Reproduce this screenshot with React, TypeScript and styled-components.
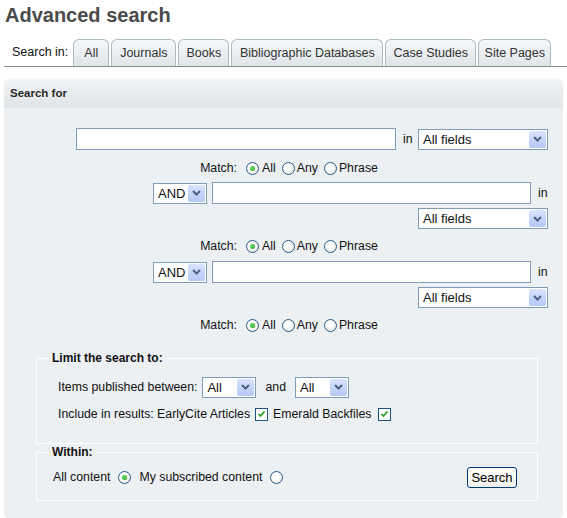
import React from 'react';
import styled, { createGlobalStyle } from 'styled-components';

const GlobalStyle = createGlobalStyle`
  body {
    margin: 0;
    background: #fff;
    font-family: "Liberation Sans", Arial, sans-serif;
    color: #111;
  }
`;

const Page = styled.div`
  width: 567px;
`;

const Title = styled.h1`
  margin: 0;
  padding: 3px 5px 0;
  font-size: 20px;
  line-height: 24px;
  font-weight: bold;
  color: #4a4a4a;
`;

const TabBar = styled.div`
  display: flex;
  align-items: flex-end;
  margin: 11px 0 0 4px;
  padding-left: 8px;
  height: 28px;
  border-bottom: 1px solid #86908f;
`;

const TabLabel = styled.span`
  font-size: 12.5px;
  color: #111;
  align-self: center;
  margin-right: 5px;
`;

const Tab = styled.div<{ $w: number }>`
  box-sizing: border-box;
  width: ${p => p.$w}px;
  height: 27px;
  margin-right: 2px;
  display: flex;
  align-items: center;
  justify-content: center;
  font-size: 12.5px;
  color: #333;
  white-space: nowrap;
  border: 1px solid #aabcc0;
  border-bottom: none;
  border-radius: 6px 6px 0 0;
  background: linear-gradient(#f6f8f9, #dee5e8);
`;

const Panel = styled.div`
  margin: 11px 4px 0;
  border-radius: 6px;
  background: #ecf0f3;
`;

const PanelHeader = styled.div`
  height: 30px;
  padding-left: 6px;
  display: flex;
  align-items: center;
  font-size: 11.5px;
  font-weight: bold;
  color: #2a2a2a;
  border-radius: 6px 6px 0 0;
  background: linear-gradient(#f3f5f7, #dfe4e8);
`;

const PanelBody = styled.div`
  padding: 20px 15px 18px 22px;
`;

const Terms = styled.div`
  display: flex;
  flex-direction: column;
  align-items: flex-end;
`;

const Row = styled.div<{ $mt?: number; $gap?: number }>`
  display: flex;
  align-items: center;
  gap: ${p => p.$gap ?? 7}px;
  margin-top: ${p => p.$mt ?? 0}px;
`;

const MatchRow = styled.div<{ $mt: number }>`
  align-self: center;
  display: flex;
  align-items: center;
  height: 16px;
  margin-top: ${p => p.$mt}px;
  margin-left: 4px;
  font-size: 12.3px;
`;

const MatchLabel = styled.span`
  margin-right: 9px;
`;

const OptionText = styled.span<{ $ml?: number; $mr?: number }>`
  font-size: 12.3px;
  margin-left: ${p => p.$ml ?? 0}px;
  margin-right: ${p => p.$mr ?? 0}px;
  white-space: nowrap;
`;

const TextField = styled.input<{ $w: number }>`
  box-sizing: border-box;
  width: ${p => p.$w}px;
  height: 22px;
  border: 1px solid #7f9db9;
  background: #fff;
  padding: 0 3px;
  font: 13px "Liberation Sans", Arial, sans-serif;
  outline: none;
`;

const InLabel = styled.span<{ $mx?: number }>`
  font-size: 12.3px;
  width: 8px;
  margin: 0 ${p => p.$mx ?? 0}px;
`;

const SelectBox = styled.div<{ $w: number }>`
  box-sizing: border-box;
  width: ${p => p.$w}px;
  height: 21px;
  border: 1px solid #7f9db9;
  background: #fff;
  display: flex;
  align-items: center;
  padding: 1px;
  font-size: 13px;
`;

const SelectText = styled.span`
  flex: 1;
  padding-left: 3px;
  white-space: nowrap;
`;

const ArrowBtn = styled.span`
  width: 17px;
  height: 17px;
  border-radius: 2px;
  background: linear-gradient(#d9e4fd, #b4c8f6);
  display: flex;
  align-items: center;
  justify-content: center;
`;

const RadioDot = styled.span<{ $checked?: boolean }>`
  box-sizing: border-box;
  width: 13px;
  height: 13px;
  border-radius: 50%;
  border: 1px solid #2a5a8a;
  background: radial-gradient(circle at 40% 40%, #fff 30%, #dcdcd6 100%);
  display: inline-flex;
  align-items: center;
  justify-content: center;
  flex-shrink: 0;

  &::after {
    content: '';
    display: ${p => (p.$checked ? 'block' : 'none')};
    width: 5px;
    height: 5px;
    border-radius: 50%;
    background: radial-gradient(circle at 40% 40%, #6fe06f, #1c9a1c);
  }
`;

const CheckBox = styled.span`
  box-sizing: border-box;
  width: 13px;
  height: 13px;
  border: 1px solid #1c5180;
  background: #fff;
  display: inline-flex;
  align-items: center;
  justify-content: center;
  flex-shrink: 0;
`;

const Group = styled.fieldset<{ $mt: number }>`
  margin: ${p => p.$mt}px 10px 0 10px;
  padding: 0;
  border: 1px solid #fff;
  min-width: 0;
`;

const Legend = styled.legend`
  margin-left: 11px;
  padding: 0 4px;
  font-size: 12px;
  line-height: 16px;
  font-weight: bold;
  color: #111;
`;

const GroupBody = styled.div<{ $pl: number; $pb: number }>`
  padding: 0 20px ${p => p.$pb}px ${p => p.$pl}px;
`;

const FieldRow = styled.div<{ $mt: number }>`
  display: flex;
  align-items: center;
  height: 20px;
  margin-top: ${p => p.$mt}px;
  font-size: 12.3px;
`;

const SearchButton = styled.button`
  margin-left: auto;
  box-sizing: border-box;
  width: 50px;
  height: 21px;
  padding: 0;
  border: 1px solid #003c74;
  border-radius: 3px;
  background: linear-gradient(#ffffff, #f1f1ec);
  font: 13px "Liberation Sans", Arial, sans-serif;
  color: #000;
`;

const Select: React.FC<{ w: number; label: string }> = ({ w, label }) => (
  <SelectBox $w={w}>
    <SelectText>{label}</SelectText>
    <ArrowBtn>
      <svg width="9" height="6" viewBox="0 0 9 6">
        <path d="M1 1 L4.5 4.5 L8 1" fill="none" stroke="#4d6185" strokeWidth="2" />
      </svg>
    </ArrowBtn>
  </SelectBox>
);

const Check: React.FC = () => (
  <CheckBox>
    <svg width="9" height="8" viewBox="0 0 9 8">
      <path d="M1.5 4 L3.5 6 L7.5 1.5" fill="none" stroke="#21a121" strokeWidth="1.7" />
    </svg>
  </CheckBox>
);

const Match: React.FC<{ mt: number }> = ({ mt }) => (
  <MatchRow $mt={mt}>
    <MatchLabel>Match:</MatchLabel>
    <RadioDot $checked />
    <OptionText $ml={3} $mr={6}>All</OptionText>
    <RadioDot />
    <OptionText $ml={2} $mr={6}>Any</OptionText>
    <RadioDot />
    <OptionText $ml={2}>Phrase</OptionText>
  </MatchRow>
);

const tabs: [string, number][] = [
  ['All', 36],
  ['Journals', 65],
  ['Books', 51],
  ['Bibliographic Databases', 152],
  ['Case Studies', 91],
  ['Site Pages', 73],
];

const App: React.FC = () => {
  return (
    <Page>
      <GlobalStyle />
      <Title>Advanced search</Title>
      <TabBar>
        <TabLabel>Search in:</TabLabel>
        {tabs.map(([t, w]) => (
          <Tab key={t} $w={w}>{t}</Tab>
        ))}
      </TabBar>
      <Panel>
        <PanelHeader>Search for</PanelHeader>
        <PanelBody>
          <Terms>
            <Row>
              <TextField $w={320} />
              <InLabel>in</InLabel>
              <Select w={130} label="All fields" />
            </Row>
            <Match mt={10} />
            <Row $mt={6} $gap={5}>
              <Select w={54} label="AND" />
              <TextField $w={319} />
              <InLabel $mx={2}>in</InLabel>
            </Row>
            <Row $mt={4}>
              <Select w={130} label="All fields" />
            </Row>
            <Match mt={9} />
            <Row $mt={7} $gap={5}>
              <Select w={54} label="AND" />
              <TextField $w={319} />
              <InLabel $mx={2}>in</InLabel>
            </Row>
            <Row $mt={4}>
              <Select w={130} label="All fields" />
            </Row>
            <Match mt={9} />
          </Terms>
          <Group $mt={17}>
            <Legend>Limit the search to:</Legend>
            <GroupBody $pl={21} $pb={19}>
              <FieldRow $mt={11}>
                <OptionText $mr={5}>Items published between:</OptionText>
                <Select w={54} label="All" />
                <OptionText $ml={9} $mr={9}>and</OptionText>
                <Select w={54} label="All" />
              </FieldRow>
              <FieldRow $mt={7}>
                <OptionText $mr={5}>Include in results: EarlyCite Articles</OptionText>
                <Check />
                <OptionText $ml={5} $mr={7}>Emerald Backfiles</OptionText>
                <Check />
              </FieldRow>
            </GroupBody>
          </Group>
          <Group $mt={0}>
            <Legend>Within:</Legend>
            <GroupBody $pl={16} $pb={13}>
              <FieldRow $mt={7}>
                <OptionText $mr={8}>All content</OptionText>
                <RadioDot $checked />
                <OptionText $ml={8} $mr={8}>My subscribed content</OptionText>
                <RadioDot />
                <SearchButton>Search</SearchButton>
              </FieldRow>
            </GroupBody>
          </Group>
        </PanelBody>
      </Panel>
    </Page>
  );
};

export default App;
